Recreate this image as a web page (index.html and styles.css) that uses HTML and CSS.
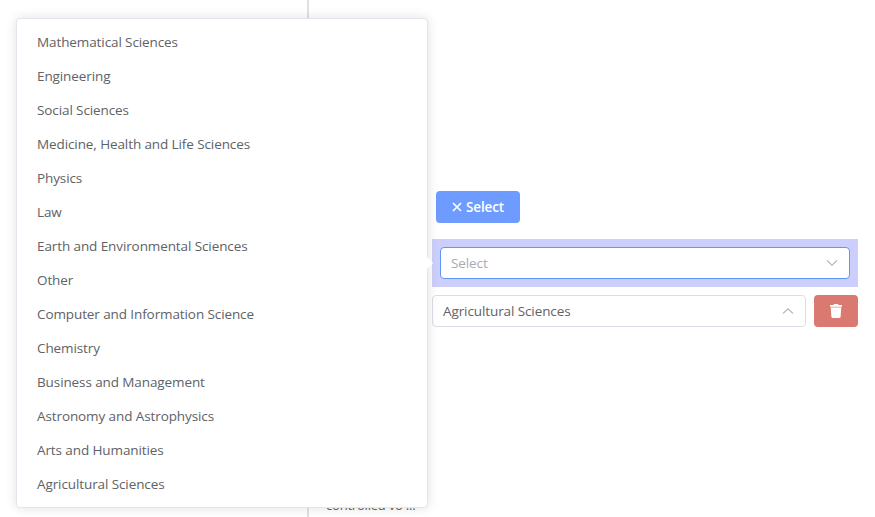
FILE: index.html
```html
<!DOCTYPE html>
<html lang="en">

<head>
    <meta charset="UTF-8">
    <meta name="viewport" content="width=device-width, initial-scale=1.0">
    <title>Select</title>
    <link rel="stylesheet" href="styles.css">
</head>

<body>
    <div class="page">
        <div class="sidebar"></div>
        <div class="main">
            <div class="label">controlled vo ...</div>
            <div class="form">
                <button class="btn btn-primary">
                    <svg width="10" height="10" viewBox="0 0 10 10" fill="none" stroke="#fff" stroke-width="1.7">
                        <path d="M1 1l8 8M9 1l-8 8" />
                    </svg>
                    <span>Select</span>
                </button>
                <div class="active-row">
                    <div class="select focus">
                        <span class="placeholder">Select</span>
                        <svg width="12" height="8" viewBox="0 0 12 8" fill="none" stroke="#b4b7be" stroke-width="1.1">
                            <path d="M1 1.5l5 4.7 5-4.7" />
                        </svg>
                    </div>
                </div>
                <div class="row">
                    <div class="select">
                        <span class="value">Agricultural Sciences</span>
                        <svg width="12" height="8" viewBox="0 0 12 8" fill="none" stroke="#b4b7be" stroke-width="1.1">
                            <path d="M1 6.5l5-4.7 5 4.7" />
                        </svg>
                    </div>
                    <button class="btn btn-danger">
                        <svg width="12" height="14" viewBox="0 0 12 14" fill="#fff">
                            <path d="M0 1h3.5l.5-1h4l.5 1H12v1.8H0z" />
                            <path d="M.8 2.8h10.4v1H.8z" opacity=".6" />
                            <path d="M.8 3.7h10.4l-.6 9.1q-.1 1.2-1.3 1.2H2.7q-1.2 0-1.3-1.2z" />
                        </svg>
                    </button>
                </div>
            </div>
        </div>

        <div class="dropdown">
            <ul class="dropdown-list">
                <li>Mathematical Sciences</li>
                <li>Engineering</li>
                <li>Social Sciences</li>
                <li>Medicine, Health and Life Sciences</li>
                <li>Physics</li>
                <li>Law</li>
                <li>Earth and Environmental Sciences</li>
                <li>Other</li>
                <li>Computer and Information Science</li>
                <li>Chemistry</li>
                <li>Business and Management</li>
                <li>Astronomy and Astrophysics</li>
                <li>Arts and Humanities</li>
                <li>Agricultural Sciences</li>
            </ul>
            <div class="arrow"></div>
        </div>
    </div>
</body>

</html>
```

FILE: styles.css
```css
* {
    box-sizing: border-box;
    margin: 0;
    padding: 0;
}

body {
    background: #fff;
    color: #606266;
    font-family: "Segoe UI", "Open Sans", "Noto Sans", sans-serif;
    font-size: 13.5px;
    letter-spacing: -0.1px;
}

.page {
    position: relative;
    display: flex;
    height: 517px;
    overflow: hidden;
}

.sidebar {
    width: 309px;
    border-right: 2px solid #dfdfe6;
}

.main {
    flex: 1;
    display: flex;
    padding-left: 17px;
    padding-right: 17px;
}

.label {
    align-self: flex-end;
    width: 106px;
    font-size: 13px;
    letter-spacing: -0.2px;
    line-height: 24px;
    white-space: nowrap;
}

.form {
    flex: 1;
    padding-top: 191px;
}

.btn {
    display: flex;
    align-items: center;
    justify-content: center;
    height: 32px;
    border: none;
    border-radius: 4px;
    color: #fff;
    font-family: inherit;
    font-size: 13.5px;
    font-weight: 600;
    letter-spacing: -0.1px;
}

.btn-primary {
    width: 84px;
    gap: 4px;
    margin-left: 4px;
    background: #6e9bff;
}

.btn-danger {
    width: 44px;
    background: #d9796f;
}

.active-row {
    margin-top: 16px;
    padding: 8px;
    background: #cccffb;
}

.row {
    display: flex;
    gap: 8px;
    margin-top: 8px;
}

.select {
    flex: 1;
    display: flex;
    align-items: center;
    justify-content: space-between;
    height: 32px;
    padding: 0 11px 0 10px;
    border: 1px solid #dcdde6;
    border-radius: 4px;
    background: #fff;
}

.select.focus {
    border-color: #6394fc;
}

.placeholder {
    color: #a8abb2;
}

.dropdown {
    position: absolute;
    left: 16px;
    top: 18px;
    width: 412px;
    height: 490px;
    padding: 6px 0;
    border: 1px solid #e4e4ec;
    border-radius: 4px;
    background: #fff;
    box-shadow: 0 0 12px rgba(0, 0, 0, 0.12);
}

.dropdown-list {
    list-style: none;
}

.dropdown-list li {
    height: 34px;
    line-height: 34px;
    padding: 0 20px;
}

.arrow {
    position: absolute;
    right: -4px;
    top: 239px;
    width: 10px;
    height: 10px;
    background: #fff;
    transform: rotate(45deg);
}
```
